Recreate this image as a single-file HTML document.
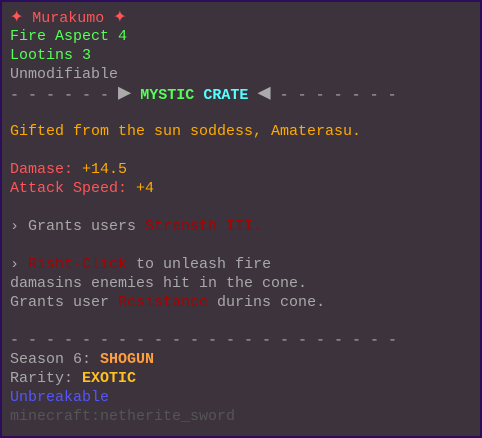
<!DOCTYPE html>
<html><head><style>
html,body{margin:0;padding:0;background:#3c333d;}
.box{position:absolute;left:0;top:0;width:478px;height:434px;border:2px solid #2c0d5c;background:#3c333d;}
.l{position:absolute;left:8px;font:15px/19px "Liberation Mono",monospace;white-space:pre;color:#a8a8a8;}
.r{color:#ff5555}.g{color:#55ff55}.o{color:#ffaa00}.d{color:#aa0000}.b{color:#5555ff}.dk{color:#555555}
.bold{font-weight:bold}
</style></head><body>
<div class="box">
<div class="l r" style="top:5px"><span style="font-size:22px">✦</span> Murakumo <span style="font-size:22px">✦</span></div>
<div class="l g" style="top:25px">Fire Aspect 4</div>
<div class="l g" style="top:44px">Lootins 3</div>
<div class="l" style="top:63px">Unmodifiable</div>
<div class="l" style="top:82px">- - - - - - <span style="color:#aaa;font-size:22px;line-height:19px">▶</span> <span class="bold" style="color:#55ff55">MYSTIC</span> <span class="bold" style="color:#55ffff">CRATE</span> <span style="color:#aaa;font-size:22px;line-height:19px">◀</span> - - - - - - -</div>
<div class="l o" style="top:120px">Gifted from the sun soddess, Amaterasu.</div>
<div class="l r" style="top:158px">Damase: <span class="o">+14.5</span></div>
<div class="l r" style="top:177px">Attack Speed: <span class="o">+4</span></div>
<div class="l" style="top:215px">› Grants users <span class="d">Strensth III.</span></div>
<div class="l" style="top:253px">› <span class="d">Risht-Click</span> to unleash fire</div>
<div class="l" style="top:272px">damasins enemies hit in the cone.</div>
<div class="l" style="top:291px">Grants user <span class="d">Resistance</span> durins cone.</div>
<div class="l" style="top:329px">- - - - - - - - - - - - - - - - - - - - - -</div>
<div class="l" style="top:348px">Season 6: <span class="bold" style="color:#ff9f40">SHOGUN</span></div>
<div class="l" style="top:367px">Rarity: <span class="bold" style="color:#ffc020">EXOTIC</span></div>
<div class="l b" style="top:386px">Unbreakable</div>
<div class="l dk" style="top:405px">minecraft:netherite_sword</div>
</div>
</body></html>
